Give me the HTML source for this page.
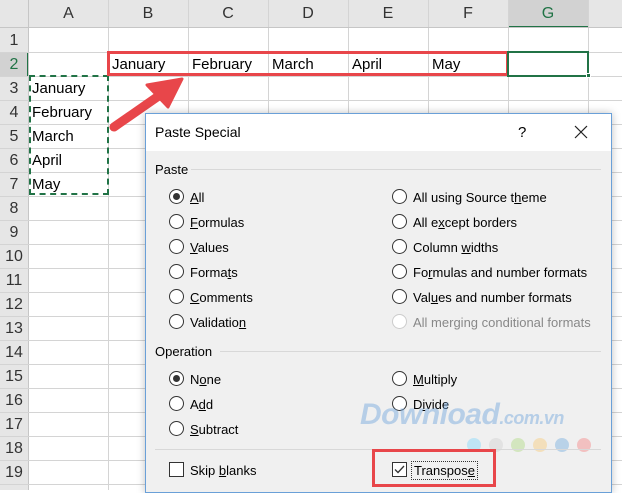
<!DOCTYPE html>
<html><head><meta charset="utf-8"><style>
*{margin:0;padding:0;box-sizing:border-box}
body{width:622px;height:490px;overflow:hidden;background:#fff;font-family:"Liberation Sans",sans-serif;position:relative}
.a{position:absolute}
.vl{position:absolute;top:0;width:1px;height:490px;background:#d4d4d4}
.hl{position:absolute;left:0;height:1px;width:622px;background:#d4d4d4}
.ch{position:absolute;top:0;height:28px;font-size:16px;color:#333;text-align:center;line-height:28px}
.rh{position:absolute;left:0;width:28px;height:24px;font-size:16px;color:#333;text-align:center;line-height:25px}
.cell{position:absolute;font-size:15px;color:#000;line-height:24px}
.dl{position:absolute;font-size:13px;color:#000;white-space:nowrap}
.r{position:absolute;width:15px;height:15px;border:1px solid #333;border-radius:50%;background:#fff}
.r.on::after{content:"";position:absolute;left:3px;top:3px;width:7px;height:7px;border-radius:50%;background:#333}
u{text-decoration:underline}
</style></head><body>
<div class="a" style="left:0;top:0;width:622px;height:28px;background:#e6e6e6"></div>
<div class="a" style="left:0;top:0;width:29px;height:490px;background:#e6e6e6"></div>
<div class="a" style="left:508px;top:0;width:80px;height:28px;background:#d2d2d2"></div>
<div class="a" style="left:0;top:52px;width:29px;height:24px;background:#d2d2d2"></div>
<div class="a" style="left:508px;top:26px;width:80px;height:2px;background:#217346"></div>
<div class="a" style="left:27px;top:52px;width:2px;height:24px;background:#217346"></div>
<div class="vl" style="left:28px;background:#c6c6c6"></div>
<div class="vl" style="left:108px"></div><div class="vl" style="left:188px"></div><div class="vl" style="left:268px"></div><div class="vl" style="left:348px"></div><div class="vl" style="left:428px"></div><div class="vl" style="left:508px"></div><div class="vl" style="left:588px"></div>
<div class="hl" style="top:27px;background:#c6c6c6"></div>
<div class="hl" style="top:52px"></div><div class="hl" style="top:76px"></div><div class="hl" style="top:100px"></div><div class="hl" style="top:124px"></div><div class="hl" style="top:148px"></div><div class="hl" style="top:172px"></div><div class="hl" style="top:196px"></div><div class="hl" style="top:220px"></div><div class="hl" style="top:244px"></div><div class="hl" style="top:268px"></div><div class="hl" style="top:292px"></div><div class="hl" style="top:316px"></div><div class="hl" style="top:340px"></div><div class="hl" style="top:364px"></div><div class="hl" style="top:388px"></div><div class="hl" style="top:412px"></div><div class="hl" style="top:436px"></div><div class="hl" style="top:460px"></div><div class="hl" style="top:484px"></div>
<div class="ch" style="left:29px;width:79px">A</div><div class="ch" style="left:108px;width:80px">B</div><div class="ch" style="left:188px;width:80px">C</div><div class="ch" style="left:268px;width:80px">D</div><div class="ch" style="left:348px;width:80px">E</div><div class="ch" style="left:428px;width:80px">F</div><div class="ch" style="left:508px;width:80px;color:#217346">G</div>
<div class="rh" style="top:28px">1</div><div class="rh" style="top:52px;color:#217346">2</div><div class="rh" style="top:76px">3</div><div class="rh" style="top:100px">4</div><div class="rh" style="top:124px">5</div><div class="rh" style="top:148px">6</div><div class="rh" style="top:172px">7</div><div class="rh" style="top:196px">8</div><div class="rh" style="top:220px">9</div><div class="rh" style="top:244px">10</div><div class="rh" style="top:268px">11</div><div class="rh" style="top:292px">12</div><div class="rh" style="top:316px">13</div><div class="rh" style="top:340px">14</div><div class="rh" style="top:364px">15</div><div class="rh" style="top:388px">16</div><div class="rh" style="top:412px">17</div><div class="rh" style="top:436px">18</div><div class="rh" style="top:460px">19</div>
<div class="cell" style="left:112px;top:53px">January</div><div class="cell" style="left:192px;top:53px">February</div><div class="cell" style="left:272px;top:53px">March</div><div class="cell" style="left:352px;top:53px">April</div><div class="cell" style="left:432px;top:53px">May</div>
<div class="cell" style="left:32px;top:77px">January</div><div class="cell" style="left:32px;top:101px">February</div><div class="cell" style="left:32px;top:125px">March</div><div class="cell" style="left:32px;top:149px">April</div><div class="cell" style="left:32px;top:173px">May</div>
<div class="a" style="left:29px;top:75px;width:80px;height:120px;border:2px dashed #217346"></div>
<div class="a" style="left:107px;top:51px;width:402px;height:25px;border:3px solid #e8464a"></div>
<div class="a" style="left:507px;top:51px;width:82px;height:26px;border:2px solid #217346"></div>
<div class="a" style="left:586px;top:73px;width:5px;height:5px;background:#217346;border:1px solid #fff"></div>
<svg class="a" style="left:0;top:0" width="622" height="490"><line x1="114" y1="127" x2="160" y2="95" stroke="#e8464a" stroke-width="9" stroke-linecap="round"/><polygon points="182,79 147,85 168,107" fill="#e8464a" stroke="#e8464a" stroke-width="3" stroke-linejoin="round"/></svg>
<div class="a" style="left:145px;top:113px;width:467px;height:380px;background:#f0f0f0;border:1px solid #6aa0d8;box-shadow:0 0 8px rgba(0,0,0,.25)"></div>
<div class="a" style="left:146px;top:114px;width:465px;height:37px;background:#fff"></div>
<div class="dl" style="left:155px;top:124px;font-size:14px">Paste Special</div>
<div class="dl" style="left:518px;top:124px;font-size:15px">?</div>
<svg class="a" style="left:574px;top:125px" width="14" height="14"><path d="M1 1L13 13M13 1L1 13" stroke="#222" stroke-width="1.2"/></svg>
<div class="dl" style="left:155px;top:162px">Paste</div>
<div class="a" style="left:191px;top:169px;width:410px;height:1px;background:#d8d8d8"></div>
<div class="r on" style="left:169px;top:189px"></div><div class="dl" style="left:190px;top:190px"><u>A</u>ll</div>
<div class="r" style="left:169px;top:214px"></div><div class="dl" style="left:190px;top:215px"><u>F</u>ormulas</div>
<div class="r" style="left:169px;top:239px"></div><div class="dl" style="left:190px;top:240px"><u>V</u>alues</div>
<div class="r" style="left:169px;top:264px"></div><div class="dl" style="left:190px;top:265px">Forma<u>t</u>s</div>
<div class="r" style="left:169px;top:289px"></div><div class="dl" style="left:190px;top:290px"><u>C</u>omments</div>
<div class="r" style="left:169px;top:314px"></div><div class="dl" style="left:190px;top:315px">Validatio<u>n</u></div>
<div class="r" style="left:392px;top:189px"></div><div class="dl" style="left:413px;top:190px">All using Source t<u>h</u>eme</div>
<div class="r" style="left:392px;top:214px"></div><div class="dl" style="left:413px;top:215px">All e<u>x</u>cept borders</div>
<div class="r" style="left:392px;top:239px"></div><div class="dl" style="left:413px;top:240px">Column <u>w</u>idths</div>
<div class="r" style="left:392px;top:264px"></div><div class="dl" style="left:413px;top:265px">Fo<u>r</u>mulas and number formats</div>
<div class="r" style="left:392px;top:289px"></div><div class="dl" style="left:413px;top:290px">Val<u>u</u>es and number formats</div>
<div class="r" style="left:392px;top:314px;border-color:#ccc"></div><div class="dl" style="left:413px;top:315px;color:#888">All merging conditional formats</div>
<div class="dl" style="left:155px;top:344px">Operation</div>
<div class="a" style="left:220px;top:351px;width:381px;height:1px;background:#d8d8d8"></div>
<div class="r on" style="left:169px;top:371px"></div><div class="dl" style="left:190px;top:372px">N<u>o</u>ne</div>
<div class="r" style="left:169px;top:396px"></div><div class="dl" style="left:190px;top:397px">A<u>d</u>d</div>
<div class="r" style="left:169px;top:421px"></div><div class="dl" style="left:190px;top:422px"><u>S</u>ubtract</div>
<div class="r" style="left:392px;top:371px"></div><div class="dl" style="left:413px;top:372px"><u>M</u>ultiply</div>
<div class="r" style="left:392px;top:396px"></div><div class="dl" style="left:413px;top:397px">D<u>i</u>vide</div>
<div class="dl" style="left:360px;top:398px;font-size:30px;font-weight:bold;font-style:italic;color:rgba(110,165,220,.45);letter-spacing:-0.5px">Download<span style="font-size:18px">.com.vn</span></div>
<div class="a" style="left:467px;top:438px;width:14px;height:14px;border-radius:50%;background:#bfe5f5"></div>
<div class="a" style="left:489px;top:438px;width:14px;height:14px;border-radius:50%;background:#e2e2e2"></div>
<div class="a" style="left:511px;top:438px;width:14px;height:14px;border-radius:50%;background:#d3e6bf"></div>
<div class="a" style="left:533px;top:438px;width:14px;height:14px;border-radius:50%;background:#f3dfbb"></div>
<div class="a" style="left:555px;top:438px;width:14px;height:14px;border-radius:50%;background:#b9d2e8"></div>
<div class="a" style="left:577px;top:438px;width:14px;height:14px;border-radius:50%;background:#f2c0c0"></div>
<div class="a" style="left:155px;top:449px;width:446px;height:1px;background:#d8d8d8"></div>
<div class="a" style="left:169px;top:462px;width:15px;height:15px;border:1px solid #333;background:#fff"></div>
<div class="dl" style="left:190px;top:463px">Skip <u>b</u>lanks</div>
<div class="a" style="left:372px;top:449px;width:124px;height:38px;border:3px solid #e8464a"></div>
<div class="a" style="left:392px;top:462px;width:15px;height:15px;border:1px solid #333;background:#fff"></div>
<svg class="a" style="left:392px;top:462px" width="15" height="15"><path d="M3 7.5L6 10.5L12 4" fill="none" stroke="#333" stroke-width="1.3"/></svg>
<div class="dl" style="left:411px;top:461px;padding:1px 2px;border:1px dotted #333">Transpos<u>e</u></div>
</body></html>
